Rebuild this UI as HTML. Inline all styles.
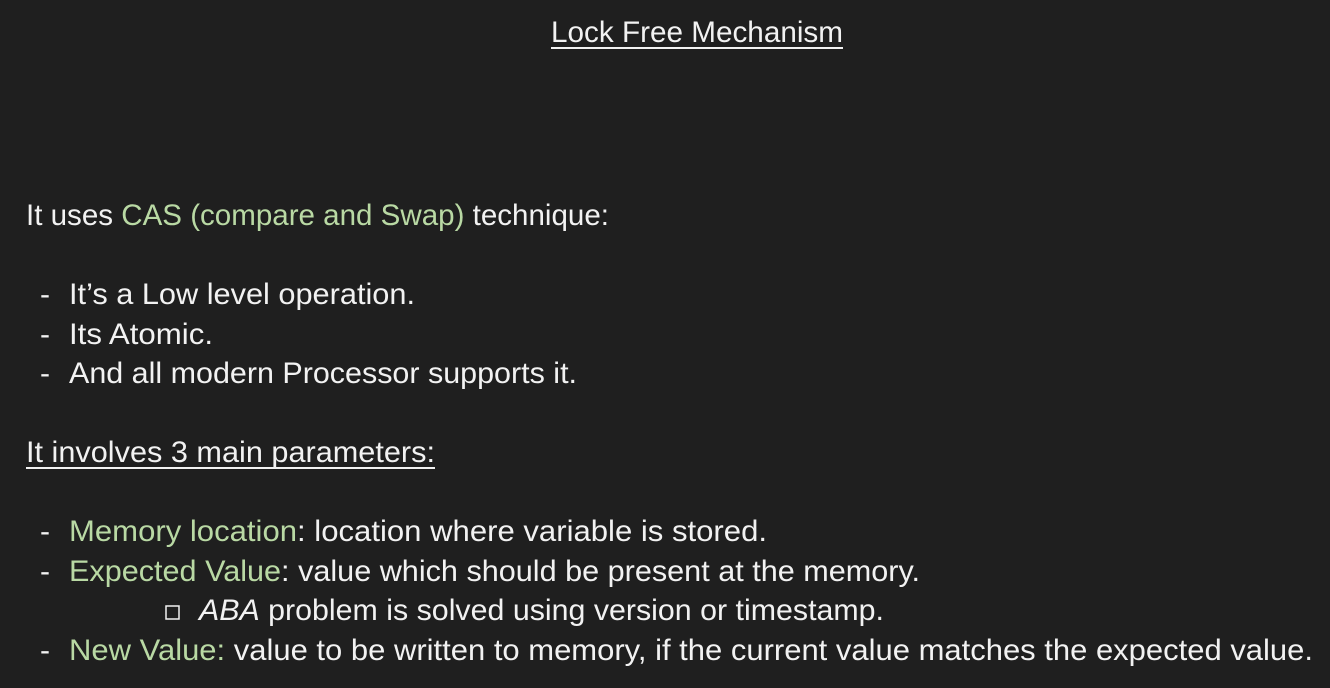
<!DOCTYPE html>
<html><head><meta charset="utf-8"><style>
html,body{margin:0;padding:0;background:#1f1f1f;}
svg{display:block}
text{font-family:"Liberation Sans",sans-serif;font-size:30px;fill:#f2f2f2}
.g{fill:#b9d9a4}
</style></head><body>
<svg width="1330" height="688" viewBox="0 0 1330 688">
<rect width="1330" height="688" fill="#1f1f1f"/>
<text x="551" y="42" textLength="292" lengthAdjust="spacingAndGlyphs">Lock Free Mechanism</text>
<rect x="551" y="47" width="292" height="2" fill="#f2f2f2"/>
<text x="26" y="225" textLength="583" lengthAdjust="spacingAndGlyphs">It uses <tspan class="g">CAS (compare and Swap)</tspan> technique:</text>
<text x="40" y="304">-</text><text x="69" y="304" textLength="346" lengthAdjust="spacingAndGlyphs">It’s a Low level operation.</text>
<text x="40" y="344">-</text><text x="69" y="344" textLength="144" lengthAdjust="spacingAndGlyphs">Its Atomic.</text>
<text x="40" y="383">-</text><text x="69" y="383" textLength="508" lengthAdjust="spacingAndGlyphs">And all modern Processor supports it.</text>
<text x="26" y="462" textLength="409" lengthAdjust="spacingAndGlyphs">It involves 3 main parameters:</text>
<rect x="26" y="467" width="409" height="2" fill="#f2f2f2"/>
<text x="40" y="541">-</text><text x="69" y="541" textLength="698" lengthAdjust="spacingAndGlyphs"><tspan class="g">Memory location</tspan>: location where variable is stored.</text>
<text x="40" y="581">-</text><text x="69" y="581" textLength="851" lengthAdjust="spacingAndGlyphs"><tspan class="g">Expected Value</tspan>: value which should be present at the memory.</text>
<rect x="166" y="606" width="13" height="13" fill="none" stroke="#f2f2f2" stroke-width="1.5"/>
<text x="199" y="620" textLength="685" lengthAdjust="spacingAndGlyphs"><tspan font-style="italic">ABA</tspan> problem is solved using version or timestamp.</text>
<text x="40" y="660">-</text><text x="69" y="660" textLength="1244" lengthAdjust="spacingAndGlyphs"><tspan class="g">New Value:</tspan> value to be written to memory, if the current value matches the expected value.</text>
</svg>
</body></html>
